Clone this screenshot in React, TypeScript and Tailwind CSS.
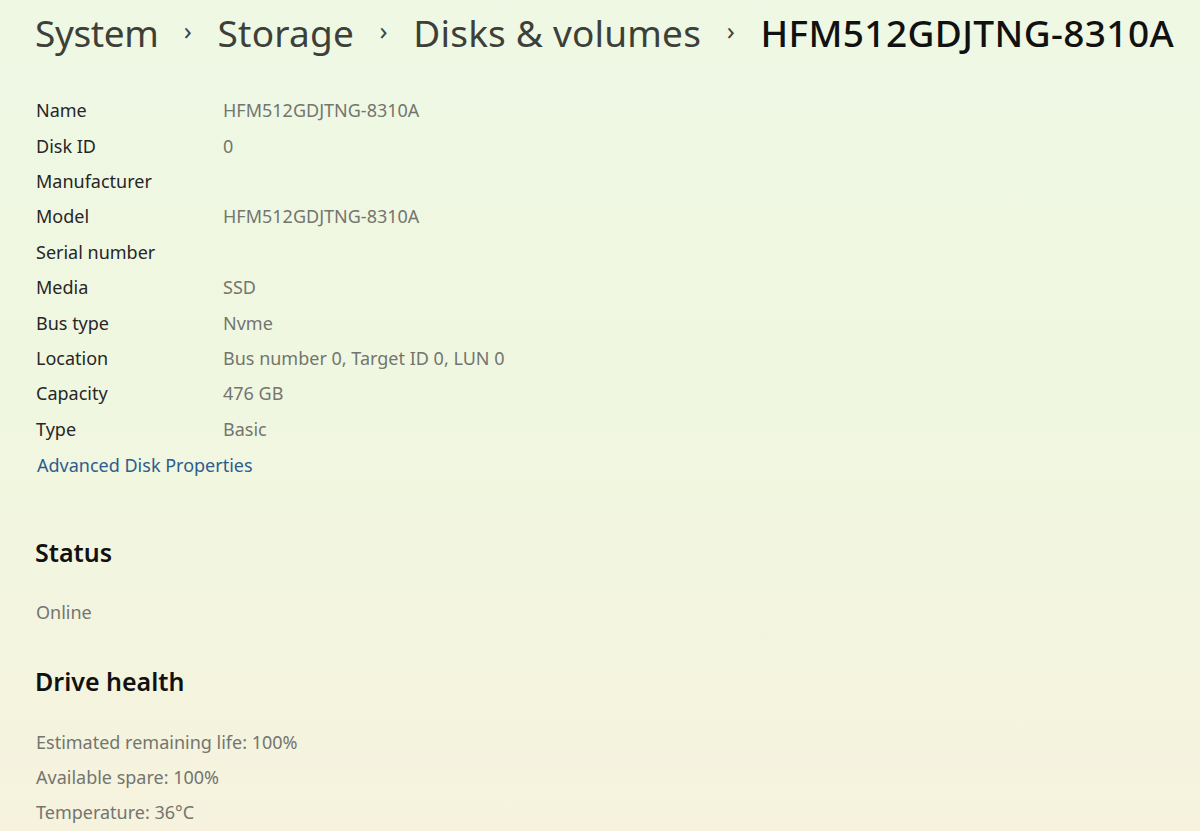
import React from 'react';

const font = { fontFamily: '"Noto Sans", "Open Sans", sans-serif' };

const props: [string, string][] = [
  ['Name', 'HFM512GDJTNG-8310A'],
  ['Disk ID', '0'],
  ['Manufacturer', ''],
  ['Model', 'HFM512GDJTNG-8310A'],
  ['Serial number', ''],
  ['Media', 'SSD'],
  ['Bus type', 'Nvme'],
  ['Location', 'Bus number 0, Target ID 0, LUN 0'],
  ['Capacity', '476 GB'],
  ['Type', 'Basic'],
];

const health = ['Estimated remaining life: 100%', 'Available spare: 100%', 'Temperature: 36°C'];

const Chevron = () => (
  <span className="mx-[25.5px] text-[26px] text-[#444] leading-none relative -top-[3px]">›</span>
);

const App = () => {
  return (
    <div
      className="w-[1200px] h-[831px] overflow-hidden bg-gradient-to-b from-[#eef8e4] via-[#f0f7e0] to-[#f6f2de] px-[35px] pt-[10px]"
      style={font}
    >
      {/* Breadcrumb */}
      <div className="flex items-center h-[46px] text-[37px] tracking-[0.2px] whitespace-nowrap">
        <span className="text-[#3d4039] tracking-[-0.4px]">System</span>
        <Chevron />
        <span className="text-[#3d4039]">Storage</span>
        <Chevron />
        <span className="text-[#3d4039]">Disks &amp; volumes</span>
        <Chevron />
        <span className="text-[#111] font-medium tracking-[0.4px]">HFM512GDJTNG-8310A</span>
      </div>

      {/* Properties */}
      <div className="mt-[37px] text-[18px]">
        {props.map(([k, v]) => (
          <div key={k} className="flex items-center h-[35.4px]">
            <span className="w-[188px] pl-px text-[#262626]">{k}</span>
            <span className="text-[#73756f]">{v}</span>
          </div>
        ))}
        <div className="flex items-center h-[37px] pl-[2px] text-[#2d5d8c]">Advanced Disk Properties</div>
      </div>

      {/* Status */}
      <h2 className="mt-[51px] text-[25px] font-semibold text-[#111] leading-[34px]">Status</h2>
      <div className="mt-[31px] text-[18px] text-[#73756f] leading-[24px] pl-px">Online</div>

      {/* Drive health */}
      <h2 className="mt-[40px] text-[25px] font-semibold text-[#111] leading-[34px]">Drive health</h2>
      <div className="mt-[27px] text-[18px] text-[#73756f] pl-px">
        {health.map((h) => (
          <div key={h} className="flex items-center h-[35.2px]">{h}</div>
        ))}
      </div>
    </div>
  );
};

export default App;
